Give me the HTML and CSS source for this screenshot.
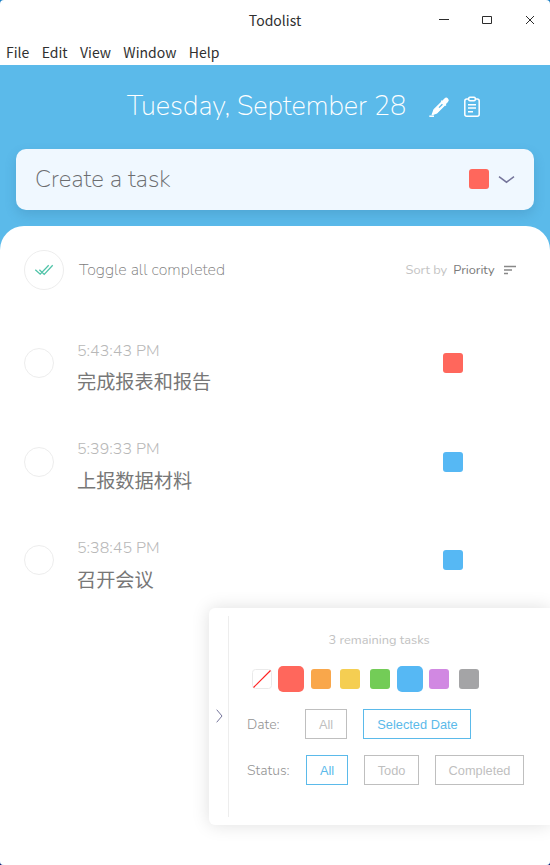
FILE: index.html
```
<!DOCTYPE html>
<html lang="en">
<head>
<meta charset="utf-8">
<title>Todolist</title>
<link rel="stylesheet" href="styles.css">
</head>
<body>
<div class="window">
  <header class="titlebar">
    <span class="app-title">Todolist</span>
    <svg class="controls" width="98" height="14" viewBox="0 0 98 14" fill="none" stroke="#2c2c2c">
      <path d="M0 6.5h10" />
      <path d="M43.5 3.5h9v7h-9z" />
      <path d="M87 3l8 8M95 3l-8 8" />
    </svg>
  </header>
  <nav class="menubar"><span>File</span><span>Edit</span><span>View</span><span>Window</span><span>Help</span></nav>
  <main class="app">
    <div class="date-row">
      <h1 class="date">Tuesday, September 28</h1>
      <svg class="dropper" width="22" height="22" viewBox="0 0 22 22">
        <path d="M4.2 18.7 6 13.7 14.4 5.3 17.4 8.3 8.9 16.9Z" fill="#fff" stroke="#fff" stroke-width="1.2" stroke-linejoin="round"/>
        <path d="M13.7 5.2 17.5 9" stroke="#fff" stroke-width="1.6" stroke-linecap="round"/>
        <path d="M16 6.4 18.2 4.2" stroke="#fff" stroke-width="5" stroke-linecap="round"/>
        <path d="M11 11.6 14.4 8.2" stroke="#5bbaea" stroke-width="1.3"/>
        <path d="M1.3 20.2h4.7" stroke="#fff" stroke-width="1.5"/>
      </svg>
      <svg class="clipboard" width="18" height="22" viewBox="0 0 18 22" fill="none" stroke="#fff" stroke-width="1.5">
        <rect x="1.8" y="3" width="14.4" height="17.2" rx="2"/>
        <rect x="5.7" y="1.3" width="6.6" height="3.4" rx="1.2" fill="#5bbaea"/>
        <path d="M5 8.7h8M5 12h8M5 15.7h5"/>
      </svg>
    </div>
    <div class="create">
      <span class="placeholder">Create a task</span>
      <i class="swatch red"></i>
      <svg class="chev" width="17" height="9" viewBox="0 0 17 9" fill="none" stroke="#75759b" stroke-width="1.5"><path d="M1 1.7 8.5 7.2 16 1.7"/></svg>
    </div>
    <section class="sheet">
      <div class="toolbar">
        <span class="toggle">
          <svg width="20" height="14" viewBox="0 0 20 14" fill="none" stroke="#4fc3a8" stroke-width="1.3"><path d="M1.3 6.7 6.2 11.2 14.7 2.2M5.4 6.7 10.2 11.4 18.7 2.2"/></svg>
        </span>
        <span class="toggle-label">Toggle all completed</span>
        <span class="sort-label">Sort by</span>
        <span class="sort-value">Priority</span>
        <svg width="12" height="10" viewBox="0 0 12 10" stroke="#888" stroke-width="1.4"><path d="M0 1.5h12M0 5h8M0 8.5h4"/></svg>
      </div>
      <ul class="tasks">
        <li class="task"><i class="check"></i><div class="info"><span class="time">5:43:43 PM</span><span class="name" lang="zh">完成报表和报告</span></div><i class="swatch red"></i></li>
        <li class="task"><i class="check"></i><div class="info"><span class="time">5:39:33 PM</span><span class="name" lang="zh">上报数据材料</span></div><i class="swatch blue"></i></li>
        <li class="task"><i class="check"></i><div class="info"><span class="time">5:38:45 PM</span><span class="name" lang="zh">召开会议</span></div><i class="swatch blue"></i></li>
      </ul>
    </section>
  </main>
  <aside class="panel">
    <div class="handle"><svg width="7" height="14" viewBox="0 0 7 14" fill="none" stroke="#75759b"><path d="M.7.7 6 7 .7 13.3"/></svg></div>
    <div class="filters">
      <p class="remaining">3 remaining tasks</p>
      <div class="colors">
        <svg class="none" width="20" height="20" viewBox="0 0 20 20" fill="none"><rect x=".5" y=".5" width="19" height="19" rx="3" stroke="#eaeaea"/><path d="M1.5 18.5 18.5 1.5" stroke="#f22" stroke-width="1.2"/></svg>
        <i class="swatch red big"></i><i class="swatch orange"></i><i class="swatch yellow"></i><i class="swatch green"></i><i class="swatch blue big"></i><i class="swatch purple"></i><i class="swatch gray"></i>
      </div>
      <div class="row date-filter"><span class="label">Date:</span><button class="all">All</button><button class="selected on">Selected Date</button></div>
      <div class="row status-filter"><span class="label">Status:</span><button class="all on">All</button><button class="todo">Todo</button><button class="completed">Completed</button></div>
    </div>
  </aside>
</div>
</body>
</html>
```
FILE: styles.css
```
* { box-sizing: border-box; }
html { background: #1d2173; }
body { margin: 0; background: linear-gradient(#1a7fc4 50%, #1d2173 50%); font-family: Nunito, Lato, "Noto Sans CJK SC", sans-serif; }
.window { position: relative; height: 865px; display: flex; flex-direction: column; background: #fff; border-radius: 4px; overflow: hidden; }
.titlebar { height: 40px; flex: none; display: grid; grid-template-columns: 1fr auto 1fr; align-items: center; font: 14px "Noto Sans CJK SC", sans-serif; color: #303030; }
.app-title { grid-column: 2; }
.controls { justify-self: end; margin-right: 13px; }
.menubar { height: 25px; flex: none; display: flex; gap: 12.4px; padding-left: 6px; font: 14px/25px "Noto Sans CJK SC", sans-serif; color: #303030; }
.app { flex: 1; display: flex; flex-direction: column; background: #5bbaea; }
.date-row { height: 84px; display: flex; align-items: center; padding-left: 127px; color: #fff; }
.date { width: 301px; margin: 0; font-weight: 200; font-size: 27.2px; line-height: 40px; white-space: nowrap; }
.clipboard { margin-left: 13px; }
.create { height: 61px; margin: 0 16px; padding: 0 19px 0 19px; display: flex; align-items: center; background: #f0f8ff; border-radius: 10px; box-shadow: 0 5px 12px rgba(40, 90, 130, .2); }
.placeholder { flex: 1; margin-top: -2px; font-weight: 200; font-size: 24px; color: #6b6d70; }
.create .swatch { margin-top: -2px; }
.chev { margin-left: 9px; }
.swatch { display: block; flex: none; width: 20px; height: 20px; border-radius: 3px; }
.red { background: #ff675c; }
.orange { background: #f9a74b; }
.yellow { background: #f5ce52; }
.green { background: #73cc57; }
.blue { background: #56b8f4; }
.purple { background: #d188e2; }
.gray { background: #a4a4a6; }
.big { width: 26px; height: 26px; border-radius: 5px; }
.sheet { flex: 1; margin-top: 16px; padding: 24px 0 0 24px; background: #fff; border-radius: 24px 24px 0 0; }
.toolbar { height: 40px; display: flex; align-items: center; padding-right: 34px; }
.toggle { width: 40px; height: 40px; display: grid; place-items: center; border: 1px solid #ededed; border-radius: 50%; }
.toggle-label { margin-left: 15px; flex: 1; font-weight: 200; font-size: 16px; color: #7c7c7c; }
.sort-label { font-size: 12.8px; color: #c4c4c4; }
.sort-value { margin: 0 9.5px 0 6px; font-size: 12.8px; color: #7a7a7a; }
.tasks { list-style: none; margin: 48px 0 0; padding: 0; }
.task { display: flex; height: 98.6px; }
.check { width: 30px; height: 30px; margin-top: 10px; border: 1px solid #ededed; border-radius: 50%; }
.info { width: 366px; margin-left: 23px; display: flex; flex-direction: column; }
.time { font-weight: 300; font-size: 16px; line-height: 26px; color: #b8b8b8; }
.name { font: 19.2px/28px "Noto Sans CJK SC", sans-serif; margin-top: 3.3px; color: #777; }
.task:nth-child(2) .time { margin: -1px 0 1px; }
.task:nth-child(3) .name { margin-top: 4.3px; }
.task .swatch { margin-top: 15px; }
.panel { position: absolute; left: 209px; top: 608px; width: 341px; height: 217px; display: flex; padding: 8px 0; background: #fff; border-radius: 6px 0 0 6px; box-shadow: 0 0 18px rgba(0, 0, 0, .13); }
.handle { width: 20px; display: grid; place-items: center; padding: 0 0 1px 1px; border-right: 1px solid #ededed; }
.filters { flex: 1; }
.remaining { margin: 14px 0 0 99.5px; font-size: 12.8px; line-height: 20px; color: #c2c2c2; }
.colors { display: flex; align-items: center; height: 26px; margin: 16px 0 0 23px; }
.colors .none { margin-right: 6px; }
.orange { margin-left: 7px; }
.yellow { margin-left: 9px; }
.green { margin-left: 10px; }
.colors .blue { margin-left: 7px; }
.purple { margin-left: 6px; }
.gray { margin-left: 10px; }
.row { display: flex; align-items: center; height: 30px; margin: 17px 0 0 18px; }
.status-filter { margin-top: 16px; }
.label { width: 58px; font-weight: 300; font-size: 14px; color: #949494; }
.status-filter .label { width: 59px; }
button { height: 30px; padding: 0; border: 1px solid #bfbfbf; background: #fff; color: #bfbfbf; font: 12.8px "Liberation Sans", sans-serif; }
button + button { margin-left: 16px; }
.on { border-color: #5bbaea; color: #5bbaea; }
.all { width: 42px; }
.selected { width: 108px; padding-left: 1px; }
.todo { width: 55px; }
.completed { width: 89px; }
```
